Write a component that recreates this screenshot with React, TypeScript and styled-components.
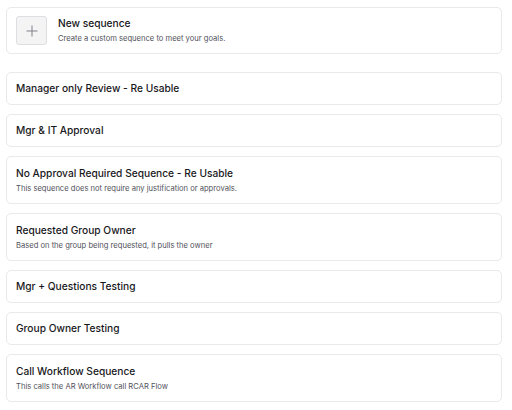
import styled, { createGlobalStyle } from 'styled-components'

const GlobalStyle = createGlobalStyle`
  body {
    margin: 0;
    background: #ffffff;
    font-family: Inter, 'Noto Sans', sans-serif;
    color: #18181b;
  }
`

const Page = styled.div`
  display: flex;
  flex-direction: column;
  padding: 7px 10px 0 6px;
`

const List = styled.ul`
  list-style: none;
  margin: 18px 0 0;
  padding: 0;
  display: flex;
  flex-direction: column;
  gap: 9px;
`

const Card = styled.div<{ $tall?: boolean }>`
  box-sizing: border-box;
  height: ${(p) => (p.$tall ? '48px' : '33px')};
  border: 1px solid #e9e9ec;
  border-radius: 5px;
  background: #fff;
  padding: 0 0 0 9px;
  display: flex;
  flex-direction: column;
  justify-content: center;
  gap: 4px;
`

const NewCard = styled(Card)`
  height: 47px;
  flex-direction: row;
  align-items: center;
  justify-content: flex-start;
  gap: 11px;
`

const PlusBox = styled.div`
  box-sizing: border-box;
  width: 31px;
  height: 29px;
  border: 1px solid #dedee2;
  border-radius: 3px;
  background: #f4f4f5;
  display: flex;
  align-items: center;
  justify-content: center;
  color: #80808a;
`

const Texts = styled.div`
  display: flex;
  flex-direction: column;
  gap: 4px;
`

const Title = styled.div`
  font-size: 10.2px;
  font-weight: 500;
  line-height: 13px;
  color: #18181b;
`

const Subtitle = styled.div`
  font-size: 7.6px;
  line-height: 10px;
  color: #52525b;
`

interface Sequence {
  name: string
  description?: string
}

const sequences: Sequence[] = [
  { name: 'Manager only Review - Re Usable' },
  { name: 'Mgr & IT Approval' },
  {
    name: 'No Approval Required Sequence - Re Usable',
    description: 'This sequence does not require any justification or approvals.',
  },
  {
    name: 'Requested Group Owner',
    description: 'Based on the group being requested, it pulls the owner',
  },
  { name: 'Mgr + Questions Testing' },
  { name: 'Group Owner Testing' },
  { name: 'Call Workflow Sequence', description: 'This calls the AR Workflow call RCAR Flow' },
]

const SequenceItem = ({ seq }: { seq: Sequence }): JSX.Element => (
  <li>
    <Card $tall={!!seq.description}>
      <Title>{seq.name}</Title>
      {seq.description && <Subtitle>{seq.description}</Subtitle>}
    </Card>
  </li>
)

const App = (): JSX.Element => {
  return (
    <Page>
      <GlobalStyle />
      <NewCard>
        <PlusBox>
          <svg width='12' height='12' viewBox='0 0 12 12' fill='none'>
            <path d='M6 0.5v11M0.5 6h11' stroke='currentColor' strokeWidth='1' />
          </svg>
        </PlusBox>
        <Texts>
          <Title>New sequence</Title>
          <Subtitle>Create a custom sequence to meet your goals.</Subtitle>
        </Texts>
      </NewCard>
      <List>
        {sequences.map((s) => (
          <SequenceItem key={s.name} seq={s} />
        ))}
      </List>
    </Page>
  )
}

export default App
